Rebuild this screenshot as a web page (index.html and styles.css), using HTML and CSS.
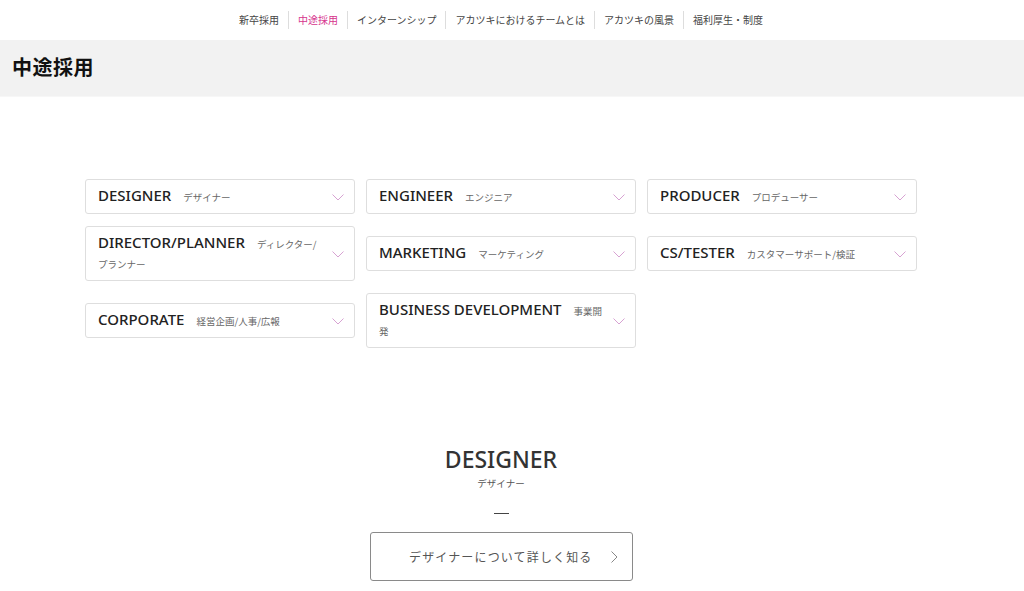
FILE: index.html
```html
<!DOCTYPE html>
<html lang="ja">
<head>
<meta charset="utf-8">
<title>中途採用</title>
<link rel="stylesheet" href="styles.css">
</head>
<body>
<div class="wrap">
  <nav class="topnav">
    <a class="nav-item">新卒採用</a>
    <a class="nav-item is-active">中途採用</a>
    <a class="nav-item">インターンシップ</a>
    <a class="nav-item">アカツキにおけるチームとは</a>
    <a class="nav-item">アカツキの風景</a>
    <a class="nav-item">福利厚生・制度</a>
  </nav>
</div>
<header class="band">
  <h1 class="page-title">中途採用</h1>
</header>
<div class="wrap">
  <section class="jobs">
    <a class="job"><span class="job-text"><span class="en">DESIGNER</span><span class="ja">デザイナー</span></span><svg class="chev" viewBox="0 0 12 7"><path d="M0.5 0.5 L6 6 L11.5 0.5"/></svg></a>
    <a class="job"><span class="job-text"><span class="en">ENGINEER</span><span class="ja">エンジニア</span></span><svg class="chev" viewBox="0 0 12 7"><path d="M0.5 0.5 L6 6 L11.5 0.5"/></svg></a>
    <a class="job"><span class="job-text"><span class="en">PRODUCER</span><span class="ja">プロデューサー</span></span><svg class="chev" viewBox="0 0 12 7"><path d="M0.5 0.5 L6 6 L11.5 0.5"/></svg></a>
    <a class="job"><span class="job-text"><span class="en">DIRECTOR/PLANNER</span><span class="ja">ディレクター/プランナー</span></span><svg class="chev" viewBox="0 0 12 7"><path d="M0.5 0.5 L6 6 L11.5 0.5"/></svg></a>
    <a class="job"><span class="job-text"><span class="en">MARKETING</span><span class="ja">マーケティング</span></span><svg class="chev" viewBox="0 0 12 7"><path d="M0.5 0.5 L6 6 L11.5 0.5"/></svg></a>
    <a class="job"><span class="job-text"><span class="en">CS/TESTER</span><span class="ja">カスタマーサポート/検証</span></span><svg class="chev" viewBox="0 0 12 7"><path d="M0.5 0.5 L6 6 L11.5 0.5"/></svg></a>
    <a class="job"><span class="job-text"><span class="en">CORPORATE</span><span class="ja">経営企画/人事/広報</span></span><svg class="chev" viewBox="0 0 12 7"><path d="M0.5 0.5 L6 6 L11.5 0.5"/></svg></a>
    <a class="job"><span class="job-text"><span class="en">BUSINESS DEVELOPMENT</span><span class="ja">事業開発</span></span><svg class="chev" viewBox="0 0 12 7"><path d="M0.5 0.5 L6 6 L11.5 0.5"/></svg></a>
  </section>

  <section class="detail">
    <h2 class="detail-title">DESIGNER</h2>
    <p class="detail-sub">デザイナー</p>
    <span class="detail-rule"></span>
    <a class="more-btn"><span>デザイナーについて詳しく知る</span><svg class="more-chev" viewBox="0 0 7 12"><path d="M0.5 0.5 L6 6 L0.5 11.5"/></svg></a>
  </section>
</div>
</body>
</html>
```

FILE: styles.css
```css
* { box-sizing: border-box; }

html, body {
  margin: 0;
  padding: 0;
  background: #ffffff;
  color: #333333;
  font-family: "Noto Sans CJK JP", "Noto Sans", sans-serif;
}

a { text-decoration: none; color: inherit; cursor: pointer; }

.wrap {
  width: 1002px;
}

/* top navigation */
.topnav {
  height: 40px;
  display: flex;
  justify-content: center;
  align-items: center;
}

.nav-item {
  font-size: 10px;
  line-height: 18px;
  color: #444444;
  padding: 0 9px;
  border-left: 1px solid #dddddd;
}

.nav-item:first-child { border-left: none; }

.nav-item.is-active { color: #d6338c; }

/* grey title band */
.band {
  background: #f2f2f2;
  height: 57px;
  display: flex;
  align-items: center;
  padding: 0 0 3px 12px;
  border-bottom: 1px solid #f7f7f7;
}

.page-title {
  margin: 0;
  font-size: 20px;
  line-height: 26px;
  font-weight: 700;
  color: #111111;
  letter-spacing: 0.5px;
}

/* job cards */
.jobs {
  margin: 82px 0 0 85px;
  display: grid;
  grid-template-columns: repeat(3, 270px);
  column-gap: 11px;
  row-gap: 12px;
  align-items: center;
}

.job {
  display: flex;
  align-items: center;
  border: 1px solid #dedede;
  border-radius: 3px;
  padding: 7px 10px 6px 12px;
}

.job-text {
  flex: 1;
  font-size: 10px;
  line-height: 20px;
}

.en {
  font-family: "Noto Sans", "Open Sans", sans-serif;
  font-weight: 500;
  font-size: 15px;
  line-height: 16px;
  color: #222222;
  margin-right: 12px;
}

.ja {
  font-size: 9.5px;
  line-height: 12px;
  color: #666666;
}

.chev {
  width: 12px;
  height: 7px;
  margin-left: 10px;
  flex: none;
  fill: none;
  stroke: #d7a2d2;
  stroke-width: 1;
}

/* detail */
.detail {
  margin-top: 96px;
  display: flex;
  flex-direction: column;
  align-items: center;
}

.detail-title {
  margin: 0;
  font-family: "Noto Sans", "Open Sans", sans-serif;
  font-weight: 500;
  font-size: 23px;
  line-height: 30px;
  color: #333333;
}

.detail-sub {
  margin: 2px 0 0;
  font-size: 9.5px;
  line-height: 14px;
  color: #555555;
}

.detail-rule {
  display: block;
  width: 15px;
  height: 1px;
  background: #444444;
  margin-top: 23px;
}

.more-btn {
  margin-top: 18px;
  width: 263px;
  height: 49px;
  border: 1px solid #8a8a8a;
  border-radius: 3px;
  display: flex;
  align-items: center;
  justify-content: flex-end;
  padding-right: 14px;
  font-size: 12px;
  letter-spacing: 1.15px;
  color: #555555;
}

.more-chev {
  width: 7px;
  height: 12px;
  margin-left: 18px;
  fill: none;
  stroke: #888888;
  stroke-width: 1;
}
```
